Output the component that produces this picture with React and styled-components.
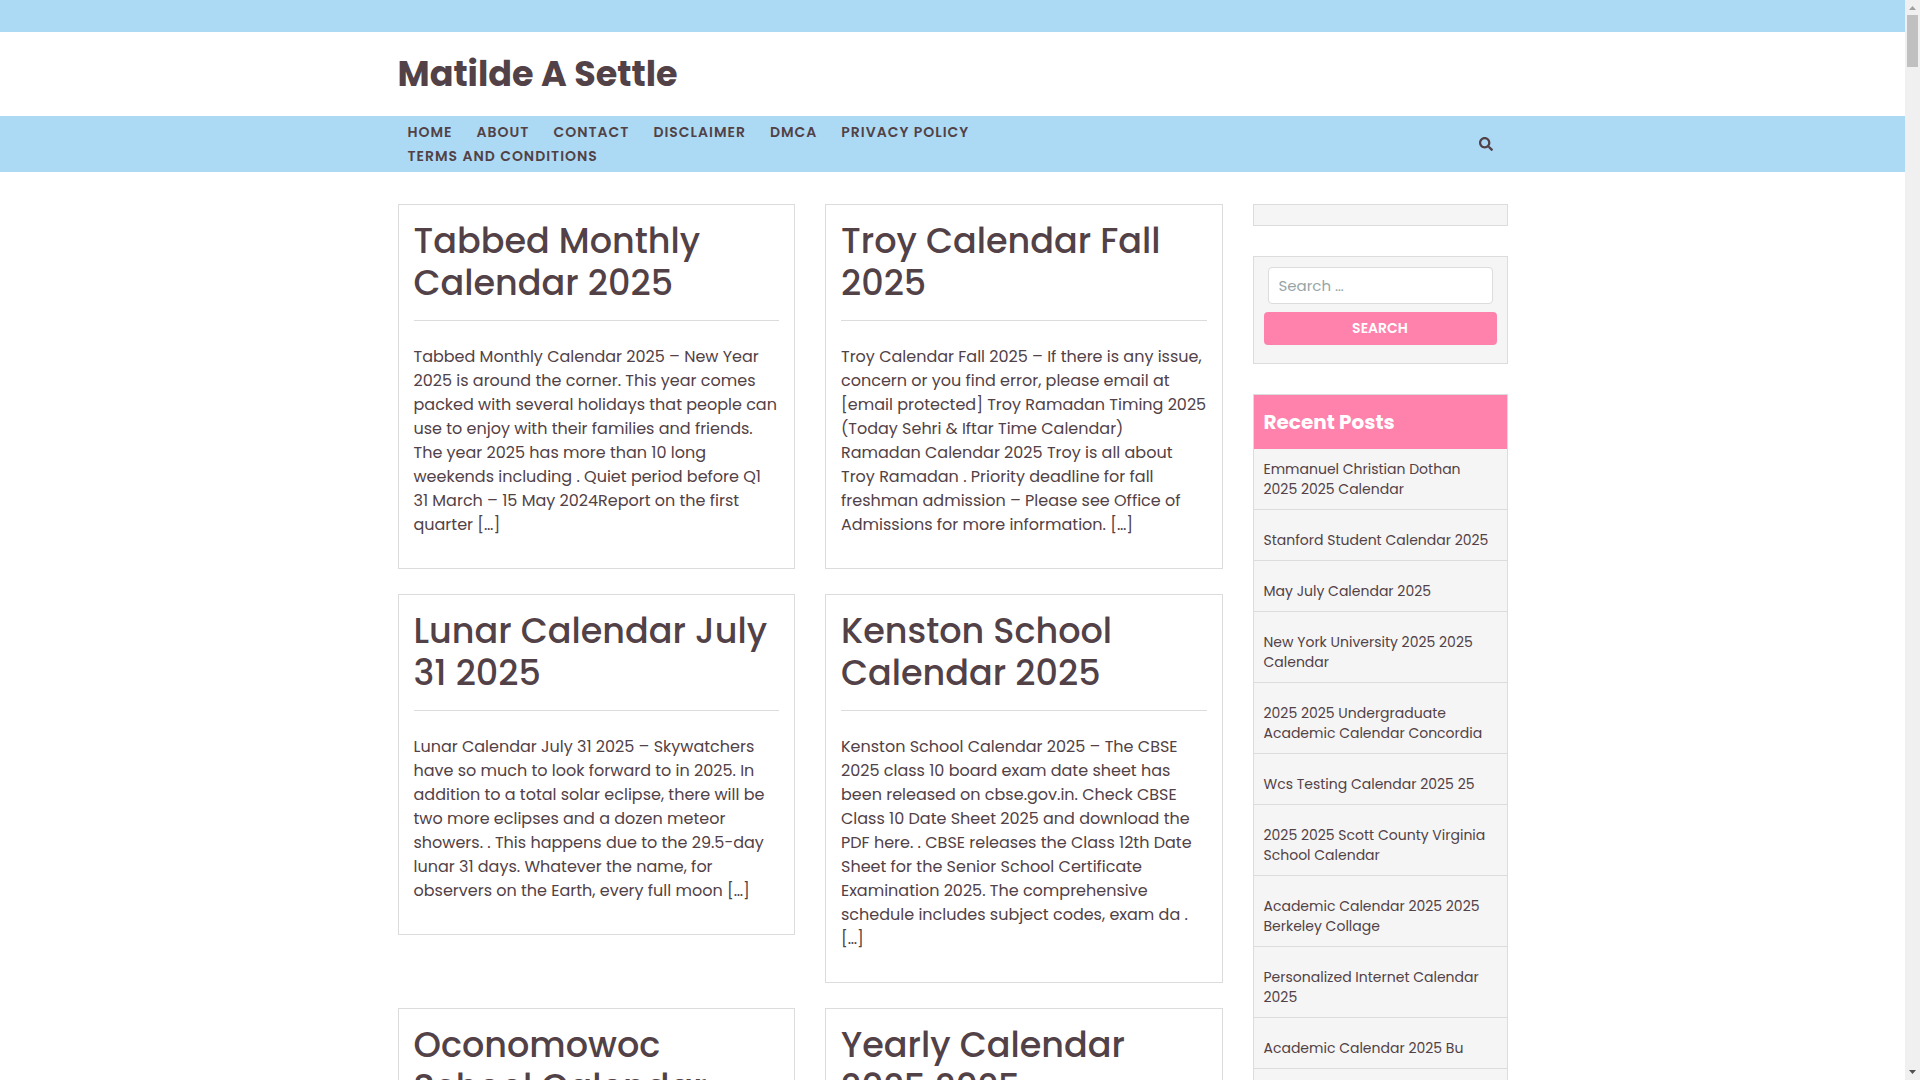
import React, { useState } from "react";
import styled, { createGlobalStyle } from "styled-components";
import { FaSearch } from "react-icons/fa";

const GlobalStyle = createGlobalStyle`
  * {
    box-sizing: border-box;
  }

  body {
    margin: 0;
    background: #fff;
    color: #524146;
    font-family: Poppins, Inter, sans-serif;
    font-size: 16px;
    line-height: 24px;
  }

  a {
    color: inherit;
    text-decoration: none;
  }
`;

// Page shell
const Shell = styled.div`
  display: flex;
  height: 100vh;
  overflow: hidden;
`;

const Page = styled.div`
  flex: 1;
  min-width: 0;
  overflow: hidden;
`;

const Container = styled.div`
  max-width: 1140px;
  margin: 0 auto;
  padding: 0 15px;
`;

// Header
const TopBar = styled.div`
  height: 32px;
  background: #acdaf4;
`;

const SiteTitle = styled.h1`
  margin: 0;
  padding: 21px 0;
  font-size: 35px;
  font-weight: 700;
  line-height: 42px;
`;

const NavBar = styled.div`
  padding: 4px 0;
  background: #acdaf4;
`;

const NavRow = styled(Container)`
  display: flex;
  align-items: center;
  justify-content: space-between;
`;

const Menu = styled.ul`
  display: flex;
  flex-wrap: wrap;
  column-gap: 24px;
  width: 60%;
  margin: 0;
  padding: 0 10px;
  list-style: none;
`;

const MenuLink = styled.a`
  font-size: 14px;
  font-weight: 600;
  letter-spacing: 1px;
  text-transform: uppercase;
`;

const SearchToggle = styled.button`
  display: flex;
  padding: 0;
  margin-right: 15px;
  border: none;
  background: none;
  color: inherit;
  font-size: 14px;
  cursor: pointer;
`;

// Content
const Content = styled(Container)`
  display: grid;
  grid-template-columns: minmax(0, 825fr) minmax(0, 255fr);
  gap: 30px;
  padding-top: 32px;
`;

const PostGrid = styled.main`
  display: grid;
  grid-template-columns: repeat(2, minmax(0, 1fr));
  align-items: start;
  align-content: start;
  gap: 25px 30px;
`;

const PostCard = styled.article`
  padding: 15px 15px 31px;
  border: 1px solid #dcdcdc;
`;

const PostTitle = styled.h2`
  margin: 0 0 24px;
  padding-bottom: 16px;
  border-bottom: 1px solid #dcdcdc;
  font-size: 35px;
  font-weight: 500;
  line-height: 42px;
  white-space: pre-line;
`;

const Excerpt = styled.p`
  margin: 0;
  white-space: pre-line;
`;

// Sidebar
const Sidebar = styled.aside`
  display: flex;
  flex-direction: column;
  gap: 30px;
`;

const Widget = styled.section`
  padding: ${(props) => props.$padding || "0"};
  border: 1px solid #dcdcdc;
  background: #f5f5f5;
`;

const SearchForm = styled.form`
  display: flex;
  flex-direction: column;
  gap: 8px;
`;

const SearchField = styled.input`
  height: 37px;
  margin: 0 4px;
  padding: 0 10px;
  border: 1px solid #dcdcdc;
  border-radius: 4px;
  background: #fff;
  color: inherit;
  font-family: inherit;
  font-size: 15px;

  &::placeholder {
    color: #95a5a6;
    opacity: 1;
  }
`;

const SearchButton = styled.button`
  height: 33px;
  border: none;
  border-radius: 4px;
  background: #ff82ad;
  color: #fff;
  font-family: inherit;
  font-size: 14px;
  font-weight: 600;
  text-transform: uppercase;
  cursor: pointer;
`;

const WidgetTitle = styled.h3`
  margin: 0;
  padding: 15px 10px;
  background: #ff82ad;
  color: #fff;
  font-size: 20px;
  font-weight: 700;
  line-height: 24px;
`;

const RecentList = styled.ul`
  margin: 0;
  padding: 0 0 30px;
  list-style: none;
`;

const RecentItem = styled.li`
  padding: 20px 10px 10px;
  border-bottom: 1px solid #dcdcdc;
  font-size: 14px;
  line-height: 20px;
  white-space: pre-line;

  &:first-child {
    padding-top: 10px;
  }
`;

// Scroll bar at the right edge
const ScrollTrack = styled.div`
  display: flex;
  flex-direction: column;
  align-items: center;
  justify-content: space-between;
  width: 15px;
  padding: 6px 0;
  background: #f0f0f0;
`;

const ScrollTop = styled.div`
  display: flex;
  flex-direction: column;
  align-items: center;
  gap: 5px;
`;

const ScrollThumb = styled.div`
  width: 11px;
  height: 52px;
  background: #c0c0c0;
`;

const ScrollArrow = styled.svg`
  display: block;
  width: 7px;
  height: 4px;
`;

const menuItems = [
  "Home",
  "About",
  "Contact",
  "Disclaimer",
  "DMCA",
  "Privacy Policy",
  "Terms and Conditions",
];

const posts = [
  {
    title: "Tabbed Monthly\nCalendar 2025",
    excerpt: `Tabbed Monthly Calendar 2025 – New Year
2025 is around the corner. This year comes
packed with several holidays that people can
use to enjoy with their families and friends.
The year 2025 has more than 10 long
weekends including . Quiet period before Q1
31 March – 15 May 2024Report on the first
quarter […]`,
  },
  {
    title: "Troy Calendar Fall\n2025",
    excerpt: `Troy Calendar Fall 2025 – If there is any issue,
concern or you find error, please email at
[email protected] Troy Ramadan Timing 2025
(Today Sehri & Iftar Time Calendar)
Ramadan Calendar 2025 Troy is all about
Troy Ramadan . Priority deadline for fall
freshman admission – Please see Office of
Admissions for more information. […]`,
  },
  {
    title: "Lunar Calendar July\n31 2025",
    excerpt: `Lunar Calendar July 31 2025 – Skywatchers
have so much to look forward to in 2025. In
addition to a total solar eclipse, there will be
two more eclipses and a dozen meteor
showers. . This happens due to the 29.5-day
lunar 31 days. Whatever the name, for
observers on the Earth, every full moon […]`,
  },
  {
    title: "Kenston School\nCalendar 2025",
    excerpt: `Kenston School Calendar 2025 – The CBSE
2025 class 10 board exam date sheet has
been released on cbse.gov.in. Check CBSE
Class 10 Date Sheet 2025 and download the
PDF here. . CBSE releases the Class 12th Date
Sheet for the Senior School Certificate
Examination 2025. The comprehensive
schedule includes subject codes, exam da .
[…]`,
  },
  { title: "Oconomowoc\nSchool Calendar" },
  { title: "Yearly Calendar\n2025 2025" },
];

const recentPosts = [
  "Emmanuel Christian Dothan\n2025 2025 Calendar",
  "Stanford Student Calendar 2025",
  "May July Calendar 2025",
  "New York University 2025 2025\nCalendar",
  "2025 2025 Undergraduate\nAcademic Calendar Concordia",
  "Wcs Testing Calendar 2025 25",
  "2025 2025 Scott County Virginia\nSchool Calendar",
  "Academic Calendar 2025 2025\nBerkeley Collage",
  "Personalized Internet Calendar\n2025",
  "Academic Calendar 2025 Bu",
];

const App = () => {
  const [query, setQuery] = useState("");

  return (
    <Shell>
      <GlobalStyle />
      <Page>
        <header>
          <TopBar />
          <Container>
            <SiteTitle>
              <a href="#home">Matilde A Settle</a>
            </SiteTitle>
          </Container>
          <NavBar>
            <NavRow as="nav">
              <Menu>
                {menuItems.map((item) => (
                  <li key={item}>
                    <MenuLink href="#menu">{item}</MenuLink>
                  </li>
                ))}
              </Menu>
              <SearchToggle type="button" aria-label="Open search">
                <FaSearch />
              </SearchToggle>
            </NavRow>
          </NavBar>
        </header>

        <Content>
          <PostGrid>
            {posts.map((post) => (
              <PostCard key={post.title}>
                <PostTitle>
                  <a href="#post">{post.title}</a>
                </PostTitle>
                {post.excerpt && <Excerpt>{post.excerpt}</Excerpt>}
              </PostCard>
            ))}
          </PostGrid>

          <Sidebar>
            <Widget $padding="10px" />
            <Widget $padding="10px 10px 18px">
              <SearchForm onSubmit={(e) => e.preventDefault()}>
                <SearchField
                  type="search"
                  aria-label="Search for"
                  placeholder="Search …"
                  value={query}
                  onChange={(e) => setQuery(e.target.value)}
                />
                <SearchButton type="submit">Search</SearchButton>
              </SearchForm>
            </Widget>
            <Widget>
              <WidgetTitle>Recent Posts</WidgetTitle>
              <RecentList>
                {recentPosts.map((title) => (
                  <RecentItem key={title}>
                    <a href="#recent">{title}</a>
                  </RecentItem>
                ))}
              </RecentList>
            </Widget>
          </Sidebar>
        </Content>
      </Page>

      <ScrollTrack aria-hidden="true">
        <ScrollTop>
          <ScrollArrow viewBox="0 0 7 4">
            <path d="M0 4 L3.5 0 L7 4 Z" fill="#a0a0a0" />
          </ScrollArrow>
          <ScrollThumb />
        </ScrollTop>
        <ScrollArrow viewBox="0 0 7 4">
          <path d="M0 0 L3.5 4 L7 0 Z" fill="#505050" />
        </ScrollArrow>
      </ScrollTrack>
    </Shell>
  );
};

export default App;
